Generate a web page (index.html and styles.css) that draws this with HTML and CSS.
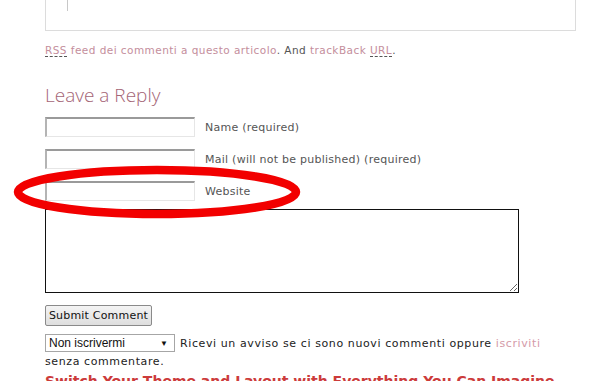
FILE: index.html
```html
<!DOCTYPE html>
<html lang="it">
<head>
<meta charset="utf-8">
<title>Leave a Reply</title>
<link rel="stylesheet" href="styles.css">
</head>
<body>
<div class="page">
  <div class="prev-box">
    <div class="thread-line"></div>
  </div>
  <p class="feed-line"><a href="#"><abbr title="Really Simple Syndication">RSS</abbr> feed dei commenti a questo articolo</a>. And <a href="#">trackBack <abbr title="Uniform Resource Locator">URL</abbr></a>.</p>
  <h3 class="reply-title">Leave a Reply</h3>
  <form class="reply-form">
    <div class="field"><input type="text" class="text-input"><label>Name (required)</label></div>
    <div class="field"><input type="text" class="text-input"><label>Mail (will not be published) (required)</label></div>
    <div class="field"><input type="text" class="text-input"><label>Website</label></div>
    <textarea class="comment-box"></textarea>
    <div class="submit-row"><button type="button" class="submit-btn">Submit Comment</button></div>
    <div class="subscribe">
      <div class="subscribe-first"><span class="select-box"><span>Non iscrivermi</span><span class="arrow">▼</span></span><span>Ricevi un avviso se ci sono nuovi commenti oppure <a href="#">iscriviti</a></span></div>
      <div class="subscribe-rest">senza commentare.</div>
    </div>
  </form>
  <p class="next-title">Switch Your Theme and Layout with Everything You Can Imagine</p>
  <svg class="marker" width="300" height="62" viewBox="0 0 300 62"><ellipse cx="144" cy="31" rx="139" ry="22" fill="none" stroke="#f20000" stroke-width="8.5"/></svg>
</div>
</body>
</html>
```
FILE: styles.css
```css
html, body { margin: 0; padding: 0; background: #fff; overflow: hidden; }
body { font-family: "DejaVu Sans", Verdana, sans-serif; font-size: 11px; color: #333; }
.page { position: relative; padding-left: 45px; width: 531px; }
.prev-box { height: 31px; border: 1px solid #dcdcdc; border-top: none; box-sizing: border-box; padding-left: 21px; }
.thread-line { width: 1px; height: 11px; background: #c8c8c8; }
.feed-line { margin: 12px 0 0; font-size: 10.5px; line-height: 14px; color: #555; letter-spacing: 0.45px; }
.feed-line a { color: #c48e9c; text-decoration: none; }
.feed-line abbr { text-decoration: none; border-bottom: 1px dashed #555; }
.reply-title { margin: 25px 0 0; font-family: "Open Sans", sans-serif; font-weight: 300; font-size: 19px; line-height: 26px; color: #a46475; }
.reply-form { margin-top: 9px; }
.field { display: flex; align-items: center; gap: 10px; height: 20px; margin-bottom: 12px; }
.text-input { width: 150px; height: 20px; box-sizing: border-box; margin: 0; padding: 0; border: 1px solid #e6e6e6; border-top: 2px solid #9a9a9a; border-left: 2px solid #b4b4b4; background: #fff; }
.field label { color: #555; font-size: 11px; letter-spacing: 0.25px; }
.comment-box { display: block; width: 474px; height: 84px; box-sizing: border-box; margin: -4px 0 0; border: 1px solid #111; resize: both; padding: 0; }
.submit-row { margin-top: 12px; }
.submit-btn { width: 107px; height: 21px; margin: 0; padding: 0; font-family: "DejaVu Sans", Verdana, sans-serif; font-size: 11px; letter-spacing: 0.2px; color: #111; background: linear-gradient(#f4f4f4, #dedede); border: 1px solid #8a8a8a; border-radius: 2px; }
.subscribe { margin-top: 8px; font-size: 11px; letter-spacing: 0.6px; color: #222; }
.subscribe a { color: #d49aa8; text-decoration: none; }
.subscribe-first { display: flex; align-items: center; gap: 5px; height: 18px; white-space: nowrap; }
.subscribe-rest { margin-top: 3px; line-height: 14px; }
.select-box { display: inline-flex; justify-content: space-between; align-items: center; width: 130px; height: 18px; box-sizing: border-box; padding: 0 6px 0 3px; border: 1px solid #a6a6a6; font-family: "Liberation Sans", Arial, sans-serif; font-size: 12px; letter-spacing: 0; color: #111; }
.arrow { font-size: 8px; }
.next-title { margin: 4px 0 0; font-family: "DejaVu Sans", sans-serif; font-weight: bold; font-size: 14px; color: #cc3b3b; white-space: nowrap; }
.marker { position: absolute; left: 13px; top: 161px; }
```
